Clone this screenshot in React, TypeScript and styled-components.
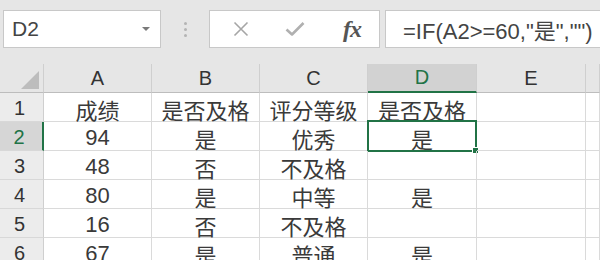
import React from "react";
import styled, { createGlobalStyle, css } from "styled-components";

const GlobalStyle = createGlobalStyle`
  body {
    margin: 0;
    background: #ffffff;
    font-family: "Liberation Sans", "Noto Sans CJK SC", sans-serif;
  }
`;

const Page = styled.div`
  width: 600px;
  height: 260px;
  overflow: hidden;
  background: #ffffff;
`;

const Toolbar = styled.div`
  height: 64px;
  box-sizing: border-box;
  padding: 10px 0 16px 3px;
  display: flex;
  align-items: stretch;
  background: #e6e6e6;
`;

const NameBox = styled.div`
  width: 158px;
  box-sizing: border-box;
  display: flex;
  align-items: center;
  justify-content: space-between;
  padding: 0 10px 0 8px;
  background: #ffffff;
  border: 1px solid #c8c8c8;
  font-size: 21px;
  color: #444444;
`;

const Caret = styled.span`
  width: 0;
  height: 0;
  border-left: 4px solid transparent;
  border-right: 4px solid transparent;
  border-top: 4px solid #7a7a7a;
`;

const Grip = styled.div`
  width: 48px;
  display: flex;
  flex-direction: column;
  align-items: center;
  justify-content: center;
  gap: 3px;
`;

const GripDot = styled.span`
  width: 3px;
  height: 3px;
  border-radius: 50%;
  background: #b4b4b4;
`;

const FnBox = styled.div`
  width: 171px;
  box-sizing: border-box;
  display: flex;
  align-items: center;
  padding-left: 23px;
  gap: 36px;
  background: #ffffff;
  border: 1px solid #c8c8c8;
`;

const FxLabel = styled.span`
  font-family: "Liberation Serif", "DejaVu Serif", serif;
  font-style: italic;
  font-weight: bold;
  font-size: 24px;
  color: #555555;
  letter-spacing: -1px;
  margin-left: 2px;
`;

const FormulaBox = styled.div`
  flex: 1;
  margin-left: 5px;
  display: flex;
  align-items: center;
  padding-left: 17px;
  background: #ffffff;
  border: 1px solid #c8c8c8;
  border-right: none;
  font-size: 22px;
  color: #444444;
  white-space: nowrap;
  overflow: hidden;
`;

const Grid = styled.div`
  display: grid;
  grid-template-columns: 44px 108px 108px 108px 109px 109px 1fr;
  grid-auto-rows: 29px;
`;

const HeaderCell = styled.div<{ $active?: boolean }>`
  position: relative;
  display: flex;
  align-items: center;
  justify-content: center;
  background: #e6e6e6;
  border-right: 1px solid #cfcfcf;
  border-bottom: 1px solid #bdbdbd;
  font-size: 20px;
  color: #333333;
  ${(p) =>
    p.$active &&
    css`
      background: #d2d2d2;
      color: #217346;
      border-bottom: 2px solid #217346;
    `}
`;

const Corner = styled.div`
  background: #e6e6e6;
  border-right: 1px solid #cfcfcf;
  border-bottom: 1px solid #bdbdbd;
  display: flex;
  align-items: flex-end;
  justify-content: flex-end;
  padding: 0 4px 3px 0;
`;

const CornerTriangle = styled.span`
  width: 0;
  height: 0;
  border-left: 18px solid transparent;
  border-bottom: 18px solid #bdbdbd;
`;

const RowHeader = styled.div<{ $active?: boolean }>`
  display: flex;
  align-items: center;
  justify-content: center;
  padding: 3px 4px 0 0;
  background: #ececec;
  border-right: 1px solid #cfcfcf;
  border-bottom: 1px solid #d8d8d8;
  font-size: 20px;
  color: #333333;
  ${(p) =>
    p.$active &&
    css`
      background: #d6d6d6;
      color: #217346;
      border-right: 2px solid #217346;
    `}
`;

const Cell = styled.div`
  position: relative;
  display: flex;
  align-items: center;
  justify-content: center;
  padding-top: 4px;
  border-right: 1px solid #dadada;
  border-bottom: 1px solid #dadada;
  font-size: 22px;
  color: #3a3a3a;
  white-space: nowrap;
`;

const Selection = styled.span`
  position: absolute;
  left: -1px;
  top: -2px;
  right: -1px;
  bottom: -2px;
  border: 2px solid #217346;
  pointer-events: none;
`;

const Handle = styled.span`
  position: absolute;
  right: -4px;
  bottom: -4px;
  width: 5px;
  height: 5px;
  background: #217346;
  border: 1px solid #ffffff;
`;

const columns = ["A", "B", "C", "D", "E", ""];

const rows = [
  ["成绩", "是否及格", "评分等级", "是否及格", "", ""],
  ["94", "是", "优秀", "是", "", ""],
  ["48", "否", "不及格", "", "", ""],
  ["80", "是", "中等", "是", "", ""],
  ["16", "否", "不及格", "", "", ""],
  ["67", "是", "普通", "是", "", ""],
];

function CancelIcon() {
  return (
    <svg width="16" height="16" viewBox="0 0 16 16">
      <path d="M1.5 1.5 L14.5 14.5 M14.5 1.5 L1.5 14.5" stroke="#a6a6a6" strokeWidth="1.6" fill="none" />
    </svg>
  );
}

function CheckIcon() {
  return (
    <svg width="20" height="16" viewBox="0 0 20 16">
      <path d="M1.5 8.5 L7 13.5 L18.5 2" stroke="#b0b0b0" strokeWidth="2.6" fill="none" strokeLinejoin="round" />
    </svg>
  );
}

export default function App() {
  return (
    <Page>
      <GlobalStyle />
      <Toolbar>
        <NameBox>
          D2
          <Caret />
        </NameBox>
        <Grip>
          <GripDot />
          <GripDot />
          <GripDot />
        </Grip>
        <FnBox>
          <CancelIcon />
          <CheckIcon />
          <FxLabel>fx</FxLabel>
        </FnBox>
        <FormulaBox>=IF(A2&gt;=60,"是","")</FormulaBox>
      </Toolbar>
      <Grid>
        <Corner>
          <CornerTriangle />
        </Corner>
        {columns.map((col, i) => (
          <HeaderCell key={`col-${i}`} $active={col === "D"}>
            {col}
          </HeaderCell>
        ))}
        {rows.map((row, r) => (
          <React.Fragment key={`row-${r}`}>
            <RowHeader $active={r === 1}>{r + 1}</RowHeader>
            {row.map((value, c) => (
              <Cell key={`cell-${r}-${c}`}>
                {value}
                {r === 1 && c === 3 && (
                  <Selection>
                    <Handle />
                  </Selection>
                )}
              </Cell>
            ))}
          </React.Fragment>
        ))}
      </Grid>
    </Page>
  );
}
